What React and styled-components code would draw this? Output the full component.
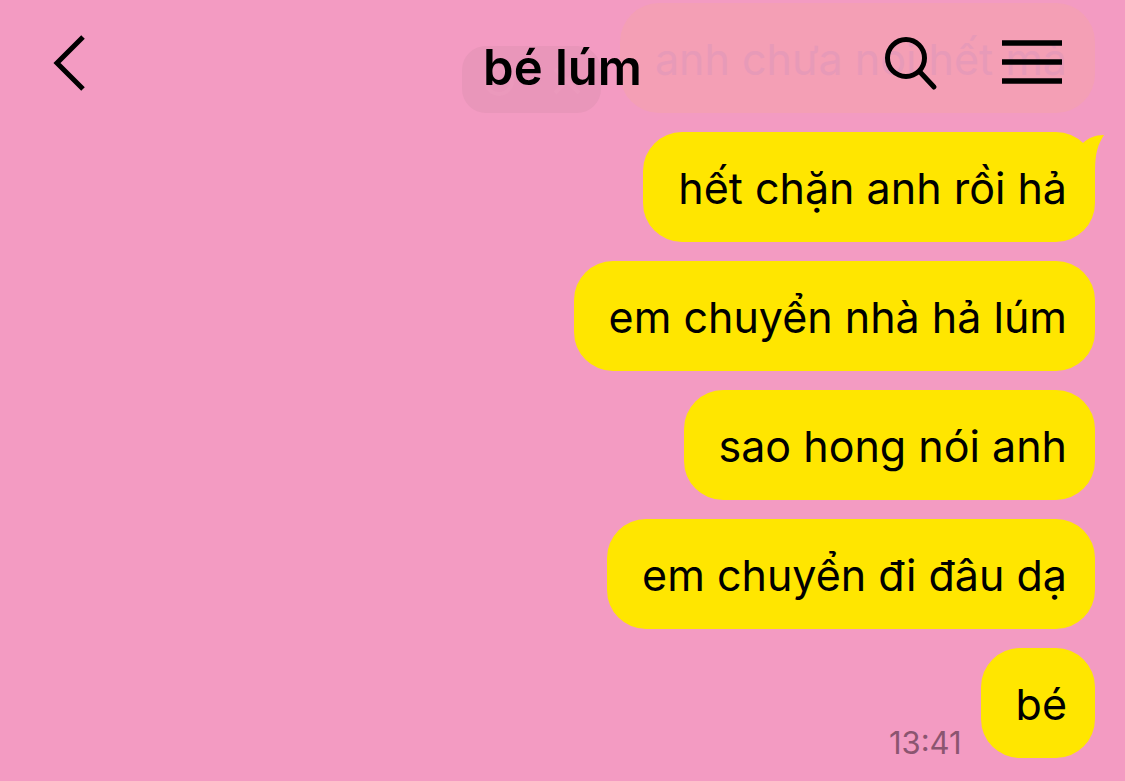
import React from 'react';
import styled, { createGlobalStyle } from 'styled-components';

const GlobalStyle = createGlobalStyle`
  body {
    margin: 0;
    background: #f39bc2;
    color: #000;
    font-family: Inter, "Liberation Sans", sans-serif;
  }
`;
const StyledChat = styled.div`
  position: relative;
  min-height: 100vh;
  overflow: hidden;
`;
const StyledHeader = styled.header`
  position: absolute;
  top: 0;
  left: 0;
  right: 0;
  z-index: 1;
  display: grid;
  grid-template-columns: 1fr auto 1fr;
  align-items: center;
  height: 126px;
  padding: 0 48px;
`;
const StyledTitle = styled.h1`
  margin: 0;
  padding-top: 10px;
  font-size: 49px;
  font-weight: 600;
  line-height: 60px;
`;
const StyledActions = styled.div`
  display: flex;
  align-items: center;
  justify-content: flex-end;
  gap: 60px;
  padding-right: 15px;
`;
const StyledIconButton = styled.button`
  display: block;
  justify-self: start;
  padding: 0;
  border: 0;
  background: none;
  color: inherit;
  cursor: pointer;

  svg {
    display: block;
  }
`;
const StyledMessages = styled.ol`
  display: flex;
  flex-direction: column;
  gap: 19px;
  margin: 0;
  padding: 3px 30px 23px;
  list-style: none;
`;
const StyledMessage = styled.li`
  display: flex;
  align-items: flex-end;
  justify-content: flex-end;
  gap: 19px;
`;
const StyledBubble = styled.div`
  position: relative;
  padding: 29px 28px 27px 35px;
  border-radius: 39px;
  background: ${({ $faded }) => ($faded ? '#f49fb5' : '#ffe600')};
  color: ${({ $faded }) => ($faded ? '#e79ab8' : '#000')};
  font-size: 43px;
  line-height: 54px;
`;
const StyledTail = styled.svg`
  position: absolute;
  top: 0;
  right: -10px;
`;
const StyledTime = styled.time`
  color: #8b5570;
  font-size: 31px;
  line-height: 30px;
`;
const StyledRetry = styled.div`
  width: 139px;
  height: 67px;
  border-radius: 24px;
  background: #e996ba;
  color: #eb99bc;

  svg {
    display: block;
  }
`;

const messages = [
  { text: 'anh chưa nói hết mà', faded: true },
  { text: 'hết chặn anh rồi hả', tail: true },
  { text: 'em chuyển nhà hả lúm' },
  { text: 'sao hong nói anh' },
  { text: 'em chuyển đi đâu dạ' },
  { text: 'bé', time: '13:41' },
];

function Tail() {
  return (
    <StyledTail width="32" height="44" viewBox="0 0 32 44" aria-hidden="true">
      <path d="M10 11C15 6 22 3 31 3C25 12 22 21 22 39L8 32Z" fill="#ffe600" />
    </StyledTail>
  );
}

function Retry() {
  return (
    <StyledRetry>
      <svg width="139" height="67" viewBox="0 0 139 67" fill="none" stroke="currentColor" strokeWidth="4" aria-hidden="true">
        <circle cx="37" cy="35" r="13" />
        <path d="M93 23L117 47M117 23L93 47" />
      </svg>
    </StyledRetry>
  );
}

export default function App() {
  return (
    <StyledChat>
      <GlobalStyle />
      <StyledHeader>
        <StyledIconButton type="button" aria-label="Back">
          <svg width="40" height="60" viewBox="0 0 40 60" fill="none" stroke="currentColor" strokeWidth="5">
            <path d="M35 4L9 30L35 56" />
          </svg>
        </StyledIconButton>
        <StyledTitle>bé lúm</StyledTitle>
        <StyledActions>
          <StyledIconButton type="button" aria-label="Search">
            <svg width="60" height="60" viewBox="0 0 60 60" fill="none" stroke="currentColor" strokeWidth="5">
              <circle cx="24" cy="25" r="18.5" />
              <path d="M38 39L52 54" strokeLinecap="round" />
            </svg>
          </StyledIconButton>
          <StyledIconButton type="button" aria-label="Menu">
            <svg width="60" height="60" viewBox="0 0 60 60" stroke="currentColor" strokeWidth="5.5">
              <path d="M0 10H60M0 29H60M0 48H60" />
            </svg>
          </StyledIconButton>
        </StyledActions>
      </StyledHeader>
      <StyledMessages>
        {messages.map((message) => (
          <StyledMessage key={message.text}>
            {message.faded && <Retry />}
            {message.time && <StyledTime>{message.time}</StyledTime>}
            <StyledBubble $faded={message.faded}>
              {message.text}
              {message.tail && <Tail />}
            </StyledBubble>
          </StyledMessage>
        ))}
      </StyledMessages>
    </StyledChat>
  );
}
